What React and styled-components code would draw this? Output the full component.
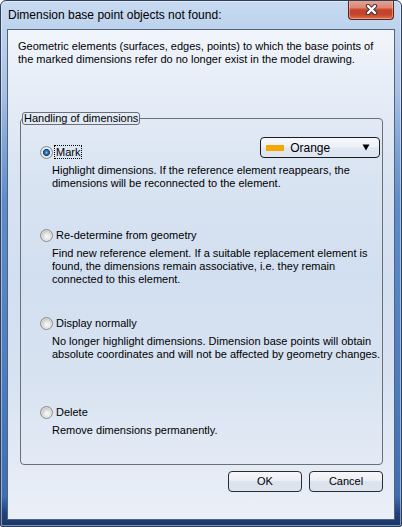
import React from 'react';
import styled, { createGlobalStyle } from 'styled-components';

const Global = createGlobalStyle`
  html, body { margin: 0; padding: 0; background: #ffffff; }
  body {
    font-family: "Liberation Sans", Arial, sans-serif;
    font-size: 11px;
    color: #000;
  }
  * { box-sizing: border-box; }
`;

const Window = styled.div`
  width: 402px;
  height: 527px;
  border: 1px solid #2c3f5c;
  border-radius: 6px 6px 2px 2px;
  background: linear-gradient(
    180deg,
    #c7daf0 0px,
    #b9cfeb 40px,
    #a8c1e4 90px,
    #82a7d8 140px,
    #5f8cc8 200px,
    #4c7cbd 380px,
    #3f6eb1 495px,
    #21427d 512px,
    #1a3568 527px
  );
  box-shadow: inset 0 0 0 1px rgba(255, 255, 255, 0.45);
  display: flex;
  flex-direction: column;
  overflow: hidden;
`;

const TitleBar = styled.div`
  height: 28px;
  flex: none;
  display: flex;
  align-items: flex-start;
  justify-content: space-between;
  padding-left: 7px;
`;

const Title = styled.div`
  font-size: 12px;
  line-height: 14px;
  margin-top: 7px;
  color: #000;
`;

const CloseButton = styled.div`
  width: 46px;
  height: 20px;
  margin-top: -1px;
  margin-right: 7px;
  border: 1px solid #5e2217;
  border-top: none;
  border-radius: 0 0 4px 4px;
  background: linear-gradient(
    180deg,
    #e7a797 0%,
    #dd8672 40%,
    #c5432c 52%,
    #c4432b 75%,
    #d9734f 100%
  );
  box-shadow: inset 0 0 0 1px rgba(255, 210, 200, 0.45);
  display: flex;
  align-items: center;
  justify-content: center;
`;

const Panel = styled.div`
  flex: 1;
  margin: 0 6px 6px 6px;
  border: 1px solid #51637d;
  background: linear-gradient(
    180deg,
    #f1f5fb 0%,
    #e6edf7 12%,
    #d9e4f2 30%,
    #d2dff0 50%,
    #d8e3f1 72%,
    #e3eaf5 88%,
    #ebf0f8 100%
  );
  padding: 10px 11px 0 10px;
  display: flex;
  flex-direction: column;
`;

const Intro = styled.p`
  margin: 0;
  line-height: 13px;
  white-space: nowrap;
`;

const Group = styled.fieldset`
  margin: 46px 0 0 2px;
  padding: 0;
  min-width: 0;
  border: 1px solid #6c6f74;
  border-radius: 4px;
`;

const Legend = styled.legend`
  margin-left: 1px;
  padding: 0 1px;
  border: 1px solid #6c6f74;
  border-radius: 3px;
  font-size: 11px;
  line-height: 11px;
`;

const Options = styled.div`
  display: grid;
  grid-template-rows: 83px 88px 89px auto;
  padding: 12px 3px 27px 19px;
`;

const Option = styled.div`
  display: flex;
  flex-direction: column;
`;

const OptionHeader = styled.div`
  height: 22px;
  display: flex;
  align-items: flex-end;
  justify-content: space-between;
`;

const RadioLabel = styled.label`
  display: flex;
  align-items: center;
  height: 14px;
`;

const Radio = styled.span`
  width: 13px;
  height: 13px;
  margin-right: 1px;
  border-radius: 50%;
  border: 1px solid #8b8d8f;
  flex: none;
  background: ${(p) =>
    p.$checked
      ? `radial-gradient(circle at 50% 50%, #8fd0f5 0px, #3a88cc 1.2px, #1a5898 2.6px, #123f72 3.3px, #eef1f4 3.8px, #e0e2e5 4.6px, #c9cbcf 5.6px)`
      : `radial-gradient(circle at 55% 60%, #fbfbfb 0px, #eeeeee 2px, #dadada 4px, #c8c8c8 5.6px)`};
  box-shadow: inset 0 0 0 1px rgba(255, 255, 255, 0.35);
`;

const LabelText = styled.span`
  padding: 0 1px;
  line-height: 12px;
  border: 1px dotted ${(p) => (p.$focused ? '#000' : 'transparent')};
`;

const Description = styled.p`
  margin: 5px 0 0 0;
  padding-left: 12px;
  line-height: 13px;
  white-space: nowrap;
`;

const Dropdown = styled.div`
  align-self: flex-start;
  width: 120px;
  height: 21px;
  border: 1px solid #1d1d1d;
  border-radius: 4px;
  background: linear-gradient(180deg, #f6f8fc 0%, #edf1f8 45%, #dfe7f2 55%, #dde5f1 100%);
  display: flex;
  align-items: center;
  padding: 0 9px 0 5px;
`;

const Swatch = styled.span`
  width: 18px;
  height: 6px;
  background: ${(p) => p.$color};
  margin-right: 6px;
  flex: none;
`;

const DropdownText = styled.span`
  flex: 1;
  font-size: 12px;
  line-height: 14px;
`;

const ButtonRow = styled.div`
  display: flex;
  justify-content: flex-end;
  gap: 7px;
  margin-top: 6px;
`;

const Button = styled.button`
  width: 74px;
  height: 21px;
  padding: 0;
  border: 1px solid #2b2b2b;
  border-radius: 4px;
  background: linear-gradient(180deg, #f5f7fa 0%, #ebeef3 45%, #dae2ee 52%, #dce4f0 100%);
  font-family: "Liberation Sans", Arial, sans-serif;
  font-size: 11px;
  color: #000;
  line-height: 13px;
`;

const options = [
  {
    label: 'Mark',
    checked: true,
    focused: true,
    dropdown: true,
    text: [
      'Highlight dimensions. If the reference element reappears, the',
      'dimensions will be reconnected to the element.',
    ],
  },
  {
    label: 'Re-determine from geometry',
    text: [
      'Find new reference element. If a suitable replacement element is',
      'found, the dimensions remain associative, i.e. they remain',
      'connected to this element.',
    ],
  },
  {
    label: 'Display normally',
    text: [
      'No longer highlight dimensions. Dimension base points will obtain',
      'absolute coordinates and will not be affected by geometry changes.',
    ],
  },
  {
    label: 'Delete',
    text: ['Remove dimensions permanently.'],
  },
];

const CloseIcon = () => (
  <svg width="13" height="11" viewBox="0 0 13 11">
    <path d="M3 2 L10 9 M10 2 L3 9" stroke="#3a3a3a" strokeWidth="4.4" strokeLinecap="round" />
    <path d="M3 2 L10 9 M10 2 L3 9" stroke="#ffffff" strokeWidth="2.4" strokeLinecap="round" />
  </svg>
);

const ArrowIcon = () => (
  <svg width="8" height="7" viewBox="0 0 8 7">
    <polygon points="0.5,0.5 7.5,0.5 4,6.5" fill="#000" />
  </svg>
);

export default function App() {
  return (
    <>
      <Global />
      <Window>
        <TitleBar>
          <Title>Dimension base point objects not found:</Title>
          <CloseButton>
            <CloseIcon />
          </CloseButton>
        </TitleBar>
        <Panel>
          <Intro>
            Geometric elements (surfaces, edges, points) to which the base points of
            <br />
            the marked dimensions refer do no longer exist in the model drawing.
          </Intro>
          <Group>
            <Legend>Handling of dimensions</Legend>
            <Options>
              {options.map((o) => (
                <Option key={o.label}>
                  <OptionHeader>
                    <RadioLabel>
                      <Radio $checked={o.checked} />
                      <LabelText $focused={o.focused}>{o.label}</LabelText>
                    </RadioLabel>
                    {o.dropdown && (
                      <Dropdown>
                        <Swatch $color="#f7a800" />
                        <DropdownText>Orange</DropdownText>
                        <ArrowIcon />
                      </Dropdown>
                    )}
                  </OptionHeader>
                  <Description>
                    {o.text.map((line, i) => (
                      <React.Fragment key={i}>
                        {i > 0 && <br />}
                        {line}
                      </React.Fragment>
                    ))}
                  </Description>
                </Option>
              ))}
            </Options>
          </Group>
          <ButtonRow>
            <Button>OK</Button>
            <Button>Cancel</Button>
          </ButtonRow>
        </Panel>
      </Window>
    </>
  );
}
